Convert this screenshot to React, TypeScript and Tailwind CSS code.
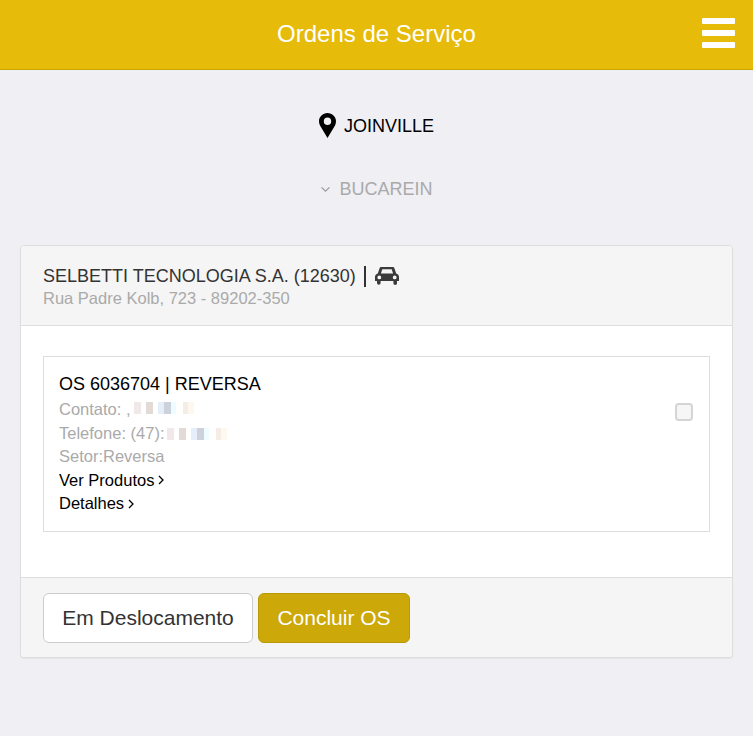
const font = "font-['Liberation_Sans',Arial,sans-serif]"

function Chevron({ className }: { className?: string }) {
  return (
    <svg viewBox="0 0 8 10" className={className} fill="none" stroke="currentColor" strokeWidth="1.3">
      <path d="M2 1 L6 5 L2 9" />
    </svg>
  )
}

const blurBlocks: [string, number][] = [
  ['#f1e9e9', 7],
  ['#ffffff', 5],
  ['#e2dad7', 7],
  ['#ffffff', 5],
  ['#e7eefb', 6],
  ['#cdd1da', 7],
  ['#eefbff', 5],
  ['#ffffff', 7],
  ['#f6ece6', 5],
  ['#fdf8f0', 6],
]

function Redacted({ className }: { className?: string }) {
  return (
    <span className={`inline-flex h-[12px] items-stretch ${className ?? ''}`}>
      {blurBlocks.map(([color, width], i) => (
        <span key={i} style={{ backgroundColor: color, width }} />
      ))}
    </span>
  )
}

export default function App() {
  return (
    <div className={`${font} min-h-[736px] bg-[#efeff4] text-[16.5px]`}>
      <header className="relative flex h-[70px] items-center justify-center border-b border-[#cca600] bg-[#e6bb09]">
        <h1 className="pb-[2px] text-[24px] text-white">Ordens de Serviço</h1>
        <div className="absolute right-[18px] top-[18px] flex w-[33px] flex-col gap-[6px]">
          <span className="h-[6px] rounded-[1px] bg-white" />
          <span className="h-[6px] rounded-[1px] bg-white" />
          <span className="h-[6px] rounded-[1px] bg-white" />
        </div>
      </header>

      <div className="flex flex-col items-center pt-[43px]">
        <div className="flex h-[26px] items-center gap-[8px] text-[18px] text-black">
          <svg viewBox="0 0 17 25" className="mb-[1px] h-[25px] w-[17px]">
            <path
              fillRule="evenodd"
              d="M8.500 0C3.800 0 0 3.700 0 8.300c0 1.500.4 2.900 1 4.100L8.500 25 16 12.400c.6-1.200 1-2.600 1-4.100C17 3.700 13.200 0 8.500 0zM8.500 4.400a3.700 3.800 0 1 1 0 7.600 3.700 3.800 0 0 1 0-7.600z"
              fill="#000"
            />
          </svg>
          <span>JOINVILLE</span>
        </div>
        <div className="mt-[37px] flex h-[26px] items-center gap-[8px] text-[18px] text-[#aaaaaa]">
          <svg viewBox="0 0 12 8" className="h-[7px] w-[11px]" fill="none" stroke="#999" strokeWidth="1.3">
            <path d="M1.500 1.500 L6 6 L10.500 1.500" />
          </svg>
          <span>BUCAREIN</span>
        </div>
      </div>

      <section className="mx-[20px] mt-[43px] overflow-hidden rounded-[4px] border border-[#dddddd] bg-white shadow-[0_1px_1px_rgba(0,0,0,0.05)]">
        <div className="h-[80px] border-b border-[#dddddd] bg-[#f5f5f5] px-[22px] pt-[18px]">
          <div className="flex h-[24px] items-center text-[18px] leading-[24px] text-[#333333]">
            <span>SELBETTI TECNOLOGIA S.A. (12630)</span>
            <span className="ml-[8px] mr-[9px] h-[21px] w-[2px] bg-[#333333]" />
            <svg viewBox="0 0 24 18" className="h-[18px] w-[24px]">
              <path
                fillRule="evenodd"
                fill="#3a3a3a"
                d="M6.500 0h11c1 0 1.700.5 2 1.400l1.700 5c1.600.4 2.800 1.700 2.800 3.400v4.200h-2v2.200a1.800 1.800 0 0 1-3.600 0V14H5.600v2a1.800 1.800 0 0 1-3.600 0v-2H0V9.800c0-1.700 1.200-3 2.800-3.400l1.700-5C4.800.5 5.500 0 6.500 0zM7.300 2.200 5.900 6.400h12.200l-1.400-4.200H7.300zM4.300 8.500a1.900 1.900 0 1 0 0 3.800 1.900 1.900 0 0 0 0-3.800zM19.700 8.500a1.900 1.900 0 1 0 0 3.800 1.900 1.900 0 0 0 0-3.800z"
              />
            </svg>
          </div>
          <div className="text-[16.5px] leading-[20px] text-[#aaaaaa]">Rua Padre Kolb, 723 - 89202-350</div>
        </div>

        <div className="px-[22px] pb-[45px] pt-[30px]">
          <div className="relative h-[176px] border border-[#dddddd] px-[15px] pt-[15px]">
            <div className="text-[18px] leading-[24px] text-black">OS 6036704 | REVERSA</div>
            <div className="mt-[1px] flex h-[24px] items-center gap-[3px] leading-[23px] text-[#aaaaaa]">
              <span>Contato: ,</span>
              <Redacted className="mb-[3px]" />
            </div>
            <div className="mt-[1px] flex h-[23px] items-center gap-[3px] leading-[23px] text-[#aaaaaa]">
              <span>Telefone: (47):</span>
              <Redacted />
            </div>
            <div className="h-[23px] leading-[23px] text-[#aaaaaa]">Setor:Reversa</div>
            <div className="flex h-[24px] items-center gap-[3px] text-black">
              <span>Ver Produtos</span>
              <Chevron className="h-[10px] w-[8px]" />
            </div>
            <div className="flex h-[23px] items-center gap-[3px] text-black">
              <span>Detalhes</span>
              <Chevron className="h-[10px] w-[8px]" />
            </div>
            <span className="absolute right-[16px] top-[46px] h-[18px] w-[18px] rounded-[4px] border-2 border-[#d5d5d5] bg-[#f6f6f6]" />
          </div>
        </div>

        <div className="flex h-[80px] gap-[5px] border-t border-[#dddddd] bg-[#f5f5f5] px-[22px] pt-[15px]">
          <button className="h-[50px] w-[210px] rounded-[6px] border border-[#cccccc] bg-white text-[21px] text-[#333333]">
            Em Deslocamento
          </button>
          <button className="h-[50px] w-[152px] rounded-[6px] border border-[#b89a05] bg-[#cca808] text-[21px] text-white">
            Concluir OS
          </button>
        </div>
      </section>
    </div>
  )
}
